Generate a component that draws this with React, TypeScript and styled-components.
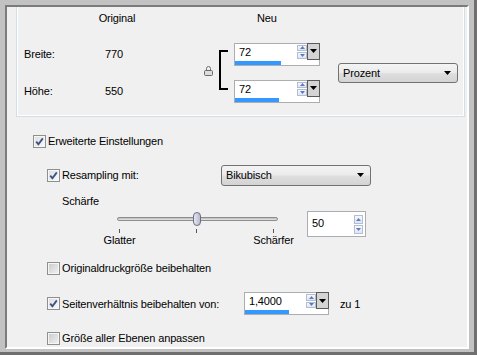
import React from 'react'
import styled, { createGlobalStyle } from 'styled-components'

const GlobalStyle = createGlobalStyle`
  html, body {
    margin: 0;
    padding: 0;
    background: #f0f0f0;
  }
  body {
    font-family: "Liberation Sans", Arial, sans-serif;
    font-size: 11px;
    letter-spacing: -0.15px;
    color: #000;
  }
`

const Window = styled.div`
  width: 477px;
  height: 355px;
  box-sizing: border-box;
  background: #c2c2c2;
  padding: 5px 5px 3px 5px;
  border-right: 3px solid #6f6f6f;
  border-bottom: 3px solid #6f6f6f;
`

const Surface = styled.div`
  height: 100%;
  box-sizing: border-box;
  background: #f0f0f0;
  border-top: 2px solid #7b7b7b;
  border-left: 2px solid #7b7b7b;
  border-right: 2px solid #fff;
  border-bottom: 2px solid #fff;
  display: flex;
  flex-direction: column;
`

const SizePanel = styled.div`
  margin: 0 2px 0 9px;
  padding: 5px 6px 14px 7px;
  border: 1px solid #d3dde6;
  border-top: none;
  box-shadow: inset 1px 0 0 #fff, inset -1px 0 0 #fff, inset 0 -1px 0 #fff;
  display: grid;
  grid-template-columns: 73px 40px 97px 86px 138px;
  grid-template-rows: 16px 22px 22px;
  row-gap: 15px;
  grid-template-areas:
    '.  orig .    neu  .'
    'lw ow   lock sw   unit'
    'lh oh   lock sh   unit';
`

const Cell = styled.div<{ $area: string; $pad?: number }>`
  grid-area: ${({ $area }) => $area};
  display: flex;
  align-items: center;
  padding-left: ${({ $pad }) => $pad ?? 0}px;
`

const Heading = styled.div<{ $area: string; $center?: boolean; $pad?: number }>`
  grid-area: ${({ $area }) => $area};
  align-self: start;
  justify-self: ${({ $center }) => ($center ? 'center' : 'start')};
  padding-left: ${({ $pad }) => $pad ?? 0}px;
  line-height: 13px;
`

const LinkColumn = styled.div`
  grid-area: lock;
  display: flex;
  align-items: center;
  justify-content: flex-end;
  gap: 6px;
  padding: 0 6px 5px 0;
`

const Bracket = styled.div`
  width: 9px;
  height: 40px;
  box-sizing: border-box;
  border: 2px solid #000;
  border-right: none;
`

const UnitCell = styled.div`
  grid-area: unit;
  display: flex;
  align-items: center;
  justify-content: flex-end;
`

const SpinBox = styled.div<{ $width: number }>`
  width: ${({ $width }) => $width}px;
  height: 23px;
  box-sizing: border-box;
  border: 1px solid #abadb3;
  background: #fff;
  display: flex;
  flex-direction: column;
`

const SpinTop = styled.div`
  display: flex;
  height: 16px;
`

const SpinValue = styled.div`
  flex: 1;
  padding-left: 4px;
  display: flex;
  align-items: center;
`

const ArrowPair = styled.div<{ $tall?: boolean }>`
  width: ${({ $tall }) => ($tall ? 9 : 10)}px;
  box-sizing: border-box;
  display: flex;
  flex-direction: column;
  gap: 1px;
  padding: ${({ $tall }) => ($tall ? '3px 0 2px' : '1px 0')};
  margin-right: ${({ $tall }) => ($tall ? 2 : 0)}px;
`

const ArrowButton = styled.div`
  flex: 1;
  box-sizing: border-box;
  border: 1px solid #b3bed3;
  background: linear-gradient(#f6f8fc, #dfe6f2);
  display: flex;
  align-items: center;
  justify-content: center;
`

const DropButton = styled.div`
  width: 13px;
  box-sizing: border-box;
  margin: -1px -1px 0 0;
  border: 1px solid #5a5a5a;
  background: #d4d4d4;
  display: flex;
  align-items: center;
  justify-content: center;
`

const Meter = styled.div`
  height: 4px;
  margin-top: 1px;
`

const MeterFill = styled.div<{ $fill: number }>`
  width: ${({ $fill }) => $fill}px;
  height: 100%;
  background: #3399ff;
`

const Combo = styled.div<{ $width: number; $height: number }>`
  width: ${({ $width }) => $width}px;
  height: ${({ $height }) => $height}px;
  box-sizing: border-box;
  border: 1px solid #727272;
  border-radius: 3px;
  background: linear-gradient(#f4f4f4 0%, #ebebeb 48%, #dfdfdf 52%, #d3d3d3 100%);
  display: flex;
  align-items: center;
  justify-content: space-between;
  padding: 0 6px 0 4px;
`

const Options = styled.div`
  display: flex;
  flex-direction: column;
  padding-left: 26px;
`

const Row = styled.div<{ $top: number; $height: number; $indent?: number; $start?: boolean }>`
  display: flex;
  align-items: ${({ $start }) => ($start ? 'flex-start' : 'center')};
  margin-top: ${({ $top }) => $top}px;
  height: ${({ $height }) => $height}px;
  padding-left: ${({ $indent }) => $indent ?? 0}px;
`

const CheckField = styled.label<{ $width?: number }>`
  display: flex;
  align-items: center;
  gap: 2px;
  width: ${({ $width }) => ($width ? `${$width}px` : 'auto')};
  flex-shrink: 0;
`

const Box = styled.span<{ $checked: boolean }>`
  width: 13px;
  height: 13px;
  box-sizing: border-box;
  border: 1px solid #8e8f8f;
  box-shadow: inset 0 0 0 1px #f6f6f6;
  background: ${({ $checked }) =>
    $checked
      ? 'linear-gradient(135deg, #dcdcdc, #fbfbfb)'
      : 'linear-gradient(135deg, #c9c9c9, #f3f3f3)'};
  display: flex;
  align-items: center;
  justify-content: center;
`

const SliderBlock = styled.div`
  width: 161px;
  flex-shrink: 0;
  display: flex;
  flex-direction: column;
`

const TrackWrap = styled.div`
  position: relative;
  height: 14px;
  margin-top: 1px;
  display: flex;
  align-items: center;
`

const Track = styled.div`
  width: 100%;
  height: 4px;
  box-sizing: border-box;
  border: 1px solid #8d8d8d;
  border-radius: 2px;
  background: linear-gradient(#b9b9b9, #e9e9e9);
`

const Thumb = styled.div`
  position: absolute;
  top: 0;
  left: 76px;
  width: 8px;
  height: 14px;
  box-sizing: border-box;
  border: 1px solid #6c6c80;
  border-radius: 4px;
  background: linear-gradient(90deg, #e6e6f2, #babad2);
`

const Ticks = styled.div`
  display: flex;
  justify-content: space-between;
  padding: 0 4px 0 2px;
  margin-top: 3px;
`

const Tick = styled.div`
  width: 1px;
  display: flex;
  flex-direction: column;
  align-items: center;
`

const TickLine = styled.div`
  width: 1px;
  height: 4px;
  background: #555;
`

const TickLabel = styled.div`
  margin-top: 1px;
  line-height: 13px;
  white-space: nowrap;
`

const ValueBox = styled.div`
  width: 59px;
  height: 26px;
  box-sizing: border-box;
  margin-left: 29px;
  border: 1px solid #abadb3;
  background: #fff;
  display: flex;
`

const ValueText = styled.div`
  flex: 1;
  padding: 0 0 3px 4px;
  display: flex;
  align-items: center;
`

const Suffix = styled.span`
  margin-left: 11px;
`

const UpArrow = () => (
  <svg width="5" height="3" viewBox="0 0 5 3">
    <path d="M0 3 L2.5 0 L5 3Z" fill="#5a7bc2" />
  </svg>
)

const DownArrow = () => (
  <svg width="5" height="3" viewBox="0 0 5 3">
    <path d="M0 0 L5 0 L2.5 3Z" fill="#5a7bc2" />
  </svg>
)

const Caret = () => (
  <svg width="7" height="4" viewBox="0 0 7 4">
    <path d="M0 0 H7 L3.5 4Z" fill="#000" />
  </svg>
)

const LockIcon = () => (
  <svg width="9" height="11" viewBox="0 0 9 11">
    <path d="M2.5 5.5V3.5a2 2 0 0 1 4 0V5.5" stroke="#707070" fill="none" />
    <rect x="0.5" y="5.5" width="8" height="5" rx="1" fill="#dcdcdc" stroke="#6a6a6a" />
  </svg>
)

const CheckMark = () => (
  <svg width="9" height="9" viewBox="0 0 9 9">
    <path d="M1.2 4.6 L3.4 7.2 L7.8 1.4" stroke="#3c5185" strokeWidth="1.8" fill="none" />
  </svg>
)

type CheckProps = { label: string; checked?: boolean; width?: number }

const Check: React.FC<CheckProps> = ({ label, checked = false, width }) => (
  <CheckField $width={width}>
    <Box $checked={checked}>{checked && <CheckMark />}</Box>
    <span>{label}</span>
  </CheckField>
)

type SpinProps = { value: string; width: number; fill: number }

const Spin: React.FC<SpinProps> = ({ value, width, fill }) => (
  <SpinBox $width={width}>
    <SpinTop>
      <SpinValue>{value}</SpinValue>
      <ArrowPair>
        <ArrowButton>
          <UpArrow />
        </ArrowButton>
        <ArrowButton>
          <DownArrow />
        </ArrowButton>
      </ArrowPair>
      <DropButton>
        <Caret />
      </DropButton>
    </SpinTop>
    <Meter>
      <MeterFill $fill={fill} />
    </Meter>
  </SpinBox>
)

export default function App() {
  return (
    <>
      <GlobalStyle />
      <Window>
        <Surface>
          <SizePanel>
            <Heading $area="orig" $center>
              Original
            </Heading>
            <Heading $area="neu" $pad={23}>
              Neu
            </Heading>

            <Cell $area="lw">Breite:</Cell>
            <Cell $area="ow" $pad={8}>
              770
            </Cell>
            <Cell $area="lh">Höhe:</Cell>
            <Cell $area="oh" $pad={8}>
              550
            </Cell>

            <LinkColumn>
              <LockIcon />
              <Bracket />
            </LinkColumn>

            <Cell $area="sw">
              <Spin value="72" width={86} fill={46} />
            </Cell>
            <Cell $area="sh">
              <Spin value="72" width={86} fill={44} />
            </Cell>

            <UnitCell>
              <Combo $width={120} $height={20}>
                <span>Prozent</span>
                <Caret />
              </Combo>
            </UnitCell>
          </SizePanel>

          <Options>
            <Row $top={14} $height={20}>
              <Check label="Erweiterte Einstellungen" checked />
            </Row>

            <Row $top={13} $height={22} $indent={14}>
              <Check label="Resampling mit:" checked width={174} />
              <Combo $width={150} $height={21}>
                <span>Bikubisch</span>
                <Caret />
              </Combo>
            </Row>

            <Row $top={8} $height={13} $indent={29}>
              Schärfe
            </Row>

            <Row $top={4} $height={36} $indent={84} $start>
              <SliderBlock>
                <TrackWrap>
                  <Track />
                  <Thumb />
                </TrackWrap>
                <Ticks>
                  <Tick>
                    <TickLine />
                    <TickLabel>Glatter</TickLabel>
                  </Tick>
                  <Tick>
                    <TickLine />
                  </Tick>
                  <Tick>
                    <TickLine />
                    <TickLabel>Schärfer</TickLabel>
                  </Tick>
                </Ticks>
              </SliderBlock>
              <ValueBox>
                <ValueText>50</ValueText>
                <ArrowPair $tall>
                  <ArrowButton>
                    <UpArrow />
                  </ArrowButton>
                  <ArrowButton>
                    <DownArrow />
                  </ArrowButton>
                </ArrowPair>
              </ValueBox>
            </Row>

            <Row $top={11} $height={20} $indent={14}>
              <Check label="Originaldruckgröße beibehalten" />
            </Row>

            <Row $top={14} $height={23} $indent={14}>
              <Check label="Seitenverhältnis beibehalten von:" checked width={197} />
              <Spin value="1,4000" width={85} fill={44} />
              <Suffix>zu 1</Suffix>
            </Row>

            <Row $top={15} $height={16} $indent={14}>
              <Check label="Größe aller Ebenen anpassen" />
            </Row>
          </Options>
        </Surface>
      </Window>
    </>
  )
}
